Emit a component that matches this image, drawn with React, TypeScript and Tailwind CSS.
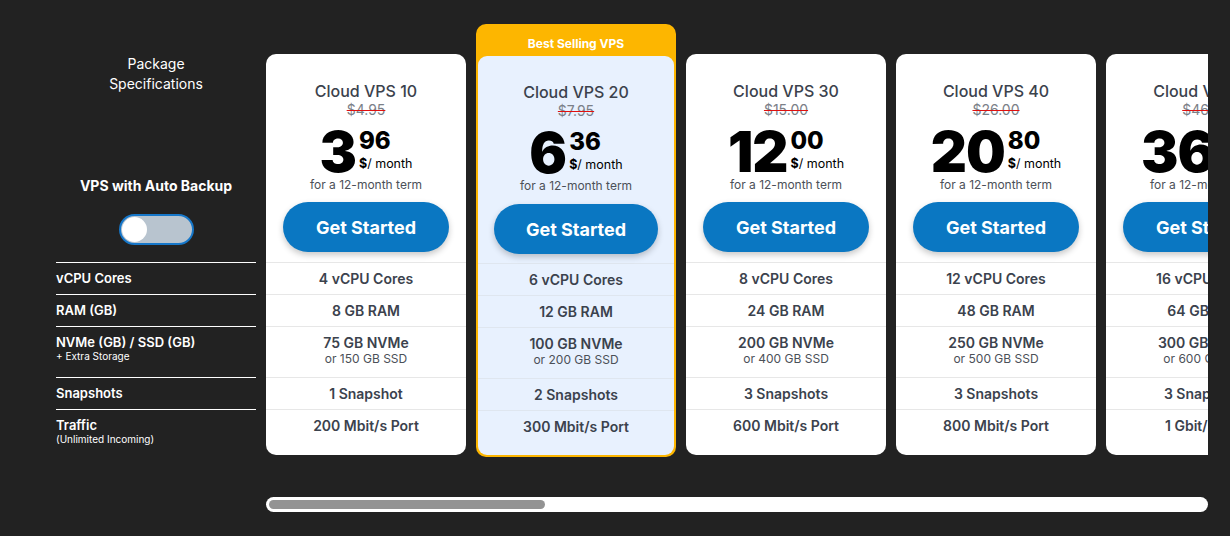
import React from "react";

type Plan = {
  name: string;
  old: string;
  big: string;
  cents: string;
  cpu: string;
  ram: string;
  nvme: string;
  ssd: string;
  snap: string;
  port: string;
  featured?: boolean;
};

const plans: Plan[] = [
  { name: "Cloud VPS 10", old: "$4.95", big: "3", cents: "96", cpu: "4 vCPU Cores", ram: "8 GB RAM", nvme: "75 GB NVMe", ssd: "or 150 GB SSD", snap: "1 Snapshot", port: "200 Mbit/s Port" },
  { name: "Cloud VPS 20", old: "$7.95", big: "6", cents: "36", cpu: "6 vCPU Cores", ram: "12 GB RAM", nvme: "100 GB NVMe", ssd: "or 200 GB SSD", snap: "2 Snapshots", port: "300 Mbit/s Port", featured: true },
  { name: "Cloud VPS 30", old: "$15.00", big: "12", cents: "00", cpu: "8 vCPU Cores", ram: "24 GB RAM", nvme: "200 GB NVMe", ssd: "or 400 GB SSD", snap: "3 Snapshots", port: "600 Mbit/s Port" },
  { name: "Cloud VPS 40", old: "$26.00", big: "20", cents: "80", cpu: "12 vCPU Cores", ram: "48 GB RAM", nvme: "250 GB NVMe", ssd: "or 500 GB SSD", snap: "3 Snapshots", port: "800 Mbit/s Port" },
  { name: "Cloud VPS 50", old: "$46.00", big: "36", cents: "80", cpu: "16 vCPU Cores", ram: "64 GB RAM", nvme: "300 GB NVMe", ssd: "or 600 GB SSD", snap: "3 Snapshots", port: "1 Gbit/s Port" },
];

function CardBody({ p }: { p: Plan }) {
  const rowBorder = p.featured ? "border-[#dfe6ef]" : "border-[#e7e7e7]";
  return (
    <>
      <div className="text-center text-[16px] leading-[24px] font-medium text-[#3b424d] whitespace-nowrap">{p.name}</div>
      <div className="text-center text-[14px] leading-[14px] text-[#7b8088] line-through decoration-[#e01010]">{p.old}</div>
      <div className="mt-[7px] flex h-[54px] items-start justify-center">
        <span className="text-[56px] leading-[56px] font-black text-black tracking-[-1px]">{p.big}</span>
        <div className="ml-[3px] mt-[5px] flex flex-col">
          <span className="text-[24px] leading-[24px] font-extrabold text-black">{p.cents}</span>
          <span className="mt-[3px] text-[12.5px] leading-[16px] text-black whitespace-nowrap">
            <span className="font-bold">$</span>/ month
          </span>
        </div>
      </div>
      <div className="text-center text-[12px] leading-[14px] text-[#4b5058] whitespace-nowrap">for a 12-month term</div>
      <div className={p.featured ? "mt-[11px] px-[16px]" : "mt-[10px] px-[17px]"}>
        <button className="h-[50px] w-full rounded-full bg-[#0a77c2] text-[18px] font-bold text-white shadow-[0_3px_6px_rgba(0,0,0,0.22)] whitespace-nowrap">
          Get Started
        </button>
      </div>
      <div className={p.featured ? "mt-[9px]" : "mt-[10px]"}>
        <div className={`flex h-[32px] items-center justify-center border-t ${rowBorder} text-[14px] font-semibold text-[#3b424d] whitespace-nowrap`}>{p.cpu}</div>
        <div className={`flex h-[32px] items-center justify-center border-t ${rowBorder} text-[14px] font-semibold text-[#3b424d] whitespace-nowrap`}>{p.ram}</div>
        <div className={`h-[51px] border-t ${rowBorder} pt-[7px] text-center whitespace-nowrap`}>
          <div className="text-[14px] leading-[18px] font-semibold text-[#3b424d]">{p.nvme}</div>
          <div className="text-[12px] leading-[14px] text-[#4b5058]">{p.ssd}</div>
        </div>
        <div className={`flex h-[32px] items-center justify-center border-t ${rowBorder} text-[14px] font-semibold text-[#3b424d] whitespace-nowrap`}>{p.snap}</div>
        <div className={`flex h-[32px] items-center justify-center border-t ${rowBorder} text-[14px] font-semibold text-[#3b424d] whitespace-nowrap`}>{p.port}</div>
      </div>
    </>
  );
}

function Card({ p }: { p: Plan }) {
  if (p.featured) {
    return (
      <div className="w-[200px] shrink-0 rounded-[10px] bg-[#fdb600] px-[2px] pb-[2px]">
        <div className="h-[32px] pt-[12px] text-center text-[12px] leading-[16px] font-bold text-white">Best Selling VPS</div>
        <div className="rounded-[9px] bg-[#e8f1fe] pt-[24px] pb-[13px]">
          <CardBody p={p} />
        </div>
      </div>
    );
  }
  return (
    <div className="mt-[30px] w-[200px] shrink-0 rounded-[10px] bg-white pt-[25px] pb-[14px]">
      <CardBody p={p} />
    </div>
  );
}

export default function App() {
  return (
    <div className="h-[536px] w-[1230px] overflow-hidden bg-[#222222] font-['Inter',sans-serif]">
      <div className="flex pl-[56px]">
        <div className="w-[200px] shrink-0 pt-[54px] text-white">
          <div className="text-center text-[14px] leading-[20px]">
            Package
            <br />
            Specifications
          </div>
          <div className="mt-[82px] text-center text-[14px] leading-[20px] font-bold">VPS with Auto Backup</div>
          <div className="mx-auto mt-[18px] flex h-[31px] w-[75px] items-center rounded-full border-2 border-[#1677c9] bg-[#b8c4cf] pl-[1px]">
            <div className="h-[25px] w-[25px] rounded-full bg-white" />
          </div>
          <div className="mt-[17px]">
            <div className="flex h-[32px] items-center border-t border-white text-[13px] font-semibold">vCPU Cores</div>
            <div className="flex h-[32px] items-center border-t border-white text-[13px] font-semibold">RAM (GB)</div>
            <div className="h-[51px] border-t border-white pt-[7px]">
              <div className="text-[13px] leading-[16px] font-semibold">NVMe (GB) / SSD (GB)</div>
              <div className="text-[10px] leading-[12px]">+ Extra Storage</div>
            </div>
            <div className="flex h-[32px] items-center border-t border-white text-[13px] font-semibold">Snapshots</div>
            <div className="h-[46px] border-t border-white pt-[7px]">
              <div className="text-[13px] leading-[16px] font-semibold">Traffic</div>
              <div className="text-[10px] leading-[12px]">(Unlimited Incoming)</div>
            </div>
          </div>
        </div>
        <div className="ml-[10px] w-[942px] shrink-0">
          <div className="flex items-start gap-[10px] overflow-hidden pt-[24px]">
            {plans.map((p) => (
              <Card key={p.name} p={p} />
            ))}
          </div>
          <div className="mt-[40px] h-[15px] w-full rounded-full bg-white p-[3px]">
            <div className="h-[9px] w-[276px] rounded-full bg-[#939393]" />
          </div>
        </div>
      </div>
    </div>
  );
}
